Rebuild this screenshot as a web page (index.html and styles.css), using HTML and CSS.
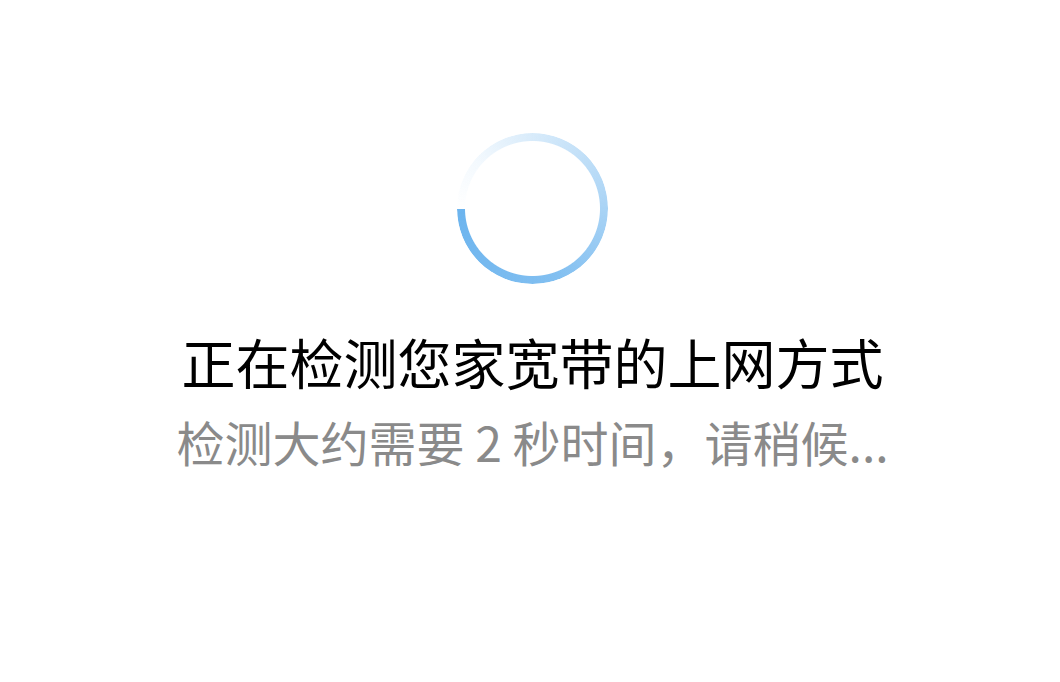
FILE: index.html
```html
<!DOCTYPE html>
<html lang="zh-CN">
  <head>
    <meta charset="UTF-8" />
    <meta name="viewport" content="width=device-width, initial-scale=1.0" />
    <title>宽带检测</title>
    <link rel="stylesheet" href="styles.css">
  </head>
  <body>
    <main class="detect">
      <!-- 加载圈 -->
      <div class="spinner"></div>
      <h1 class="detect-title">正在检测您家宽带的上网方式</h1>
      <p class="detect-tip">检测大约需要 2 秒时间，请稍候...</p>
    </main>
  </body>
</html>
```

FILE: styles.css
```css
/* 基础样式 */
body {
  margin: 0;
  padding: 0;
  background-color: #fff;
  font-family: "Noto Sans CJK SC", "Noto Sans", sans-serif;
}

.detect {
  display: flex;
  flex-direction: column;
  align-items: center;
  padding: 133px 0 0 5px;
}

/* 渐变圆环 */
.spinner {
  width: 151px;
  height: 151px;
  border-radius: 50%;
  background: conic-gradient(
    from 270deg,
    rgba(108, 180, 238, 0) 0deg,
    rgba(108, 180, 238, 0.08) 40deg,
    rgba(108, 180, 238, 0.3) 100deg,
    rgba(108, 180, 238, 0.55) 170deg,
    rgba(108, 180, 238, 0.85) 250deg,
    #6cb4ee 360deg
  );
  -webkit-mask: radial-gradient(circle, transparent 67px, #000 68px);
  mask: radial-gradient(circle, transparent 67px, #000 68px);
}

.detect-title {
  margin: 43px 0 0;
  font-size: 54px;
  font-weight: 400;
  line-height: 70px;
  color: #000;
}

.detect-tip {
  margin: 13px 0 0;
  font-size: 48px;
  line-height: 62px;
  color: #8a8a8a;
}
```
